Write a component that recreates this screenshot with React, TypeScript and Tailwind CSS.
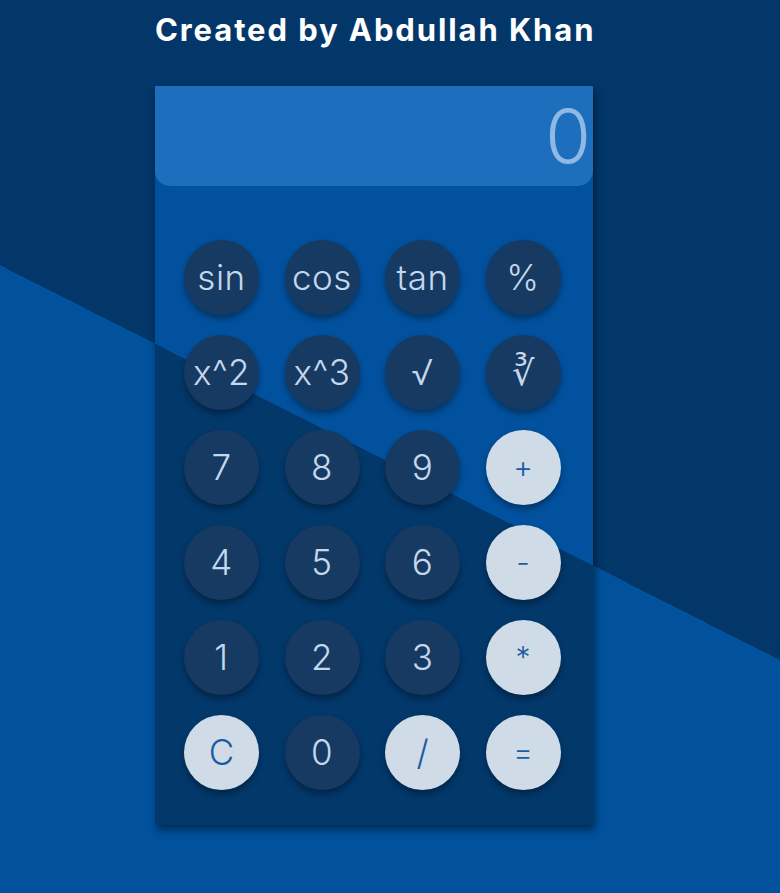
import React from "react";

const keys: { label: string; light?: boolean; small?: boolean }[] = [
  { label: "sin" },
  { label: "cos" },
  { label: "tan" },
  { label: "%" },
  { label: "x^2" },
  { label: "x^3" },
  { label: "√" },
  { label: "∛" },
  { label: "7" },
  { label: "8" },
  { label: "9" },
  { label: "+", light: true, small: true },
  { label: "4" },
  { label: "5" },
  { label: "6" },
  { label: "-", light: true, small: true },
  { label: "1" },
  { label: "2" },
  { label: "3" },
  { label: "*", light: true, small: true },
  { label: "C", light: true },
  { label: "0" },
  { label: "/", light: true },
  { label: "=", light: true, small: true },
];

export default function App() {
  return (
    <div className="min-h-screen w-full bg-fixed bg-[linear-gradient(206.86deg,#03376a_589px,#01519d_589px)] font-['Inter','Noto_Sans',sans-serif] pt-[10px] pb-[68px]">
      <h1 className="ml-[155px] w-[438px] text-center text-[31px] leading-[40px] font-bold text-white tracking-[1.9px] whitespace-nowrap">
        Created by Abdullah Khan
      </h1>
      <div className="ml-[155px] mt-[36px] w-[438px] bg-fixed bg-[linear-gradient(206.86deg,#02519e_589px,#03386b_589px)] shadow-[2px_5px_8px_rgba(0,0,0,0.45)]">
        <div className="h-[100px] rounded-b-[15px] bg-[#1d6fbe] flex items-center justify-end pr-[2px]">
          <span className="text-[74px] font-light leading-none text-[#8fb9e3]">0</span>
        </div>
        <div className="grid grid-cols-[repeat(4,75px)] gap-x-[25.5px] gap-y-[20px] pl-[29px] pt-[54px] pb-[35px]">
          {keys.map((k) => (
            <div
              key={k.label}
              className={
                k.light
                  ? k.small
                    ? "w-[75px] h-[75px] rounded-full bg-[#cfdce8] text-[#1b5ba1] flex items-center justify-center text-[30px] font-light shadow-[0_4px_6px_rgba(0,0,0,0.35)]"
                    : "w-[75px] h-[75px] rounded-full bg-[#cfdce8] text-[#1b5ba1] flex items-center justify-center text-[35px] font-light shadow-[0_4px_6px_rgba(0,0,0,0.35)]"
                  : "w-[75px] h-[75px] rounded-full bg-[#163a62] text-[#c4d7ec] flex items-center justify-center text-[35px] font-light tracking-[0.5px] shadow-[0_4px_6px_rgba(0,0,0,0.35)]"
              }
            >
              {k.label}
            </div>
          ))}
        </div>
      </div>
    </div>
  );
}
